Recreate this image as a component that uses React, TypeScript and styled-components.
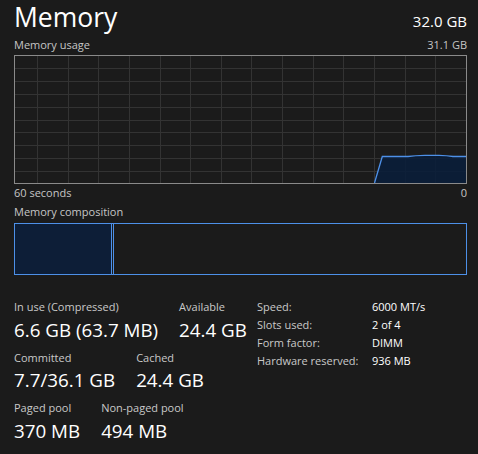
import React from "react";
import styled, { createGlobalStyle } from "styled-components";

const Global = createGlobalStyle`
  html, body { margin: 0; padding: 0; background: #1b1b1b; }
  body { font-family: "Open Sans", "Noto Sans", sans-serif; -webkit-font-smoothing: antialiased; }
`;

const Page = styled.div`
  width: 478px;
  height: 454px;
  box-sizing: border-box;
  padding: 0 11px 0 14px;
  background: #1b1b1b;
  overflow: hidden;
`;

const Header = styled.div`
  display: flex;
  justify-content: space-between;
  align-items: baseline;
  height: 34px;
  line-height: 34px;
  color: #ffffff;
`;

const Title = styled.div`
  font-size: 26.5px;
`;

const Total = styled.div`
  font-size: 15px;
`;

const SmallRow = styled.div<{ $mt: number; $lh: number }>`
  display: flex;
  justify-content: space-between;
  margin-top: ${(p) => p.$mt}px;
  line-height: ${(p) => p.$lh}px;
  font-size: 11px;
  color: #c6c6c6;
`;

const ChartFrame = styled.div`
  margin-top: 2px;
  border: 1px solid #8a8a8a;
  height: 127px;
  position: relative;
  svg { display: block; }
`;

const CompBar = styled.div`
  margin-top: 3px;
  height: 50px;
  border: 1px solid #4d90e8;
  display: flex;
`;

const Segment = styled.div<{ $w: number; $fill?: boolean }>`
  width: ${(p) => p.$w}px;
  flex: none;
  background: ${(p) => (p.$fill ? "#0d1e37" : "transparent")};
  border-right: 1px solid #4d90e8;
`;

const Stats = styled.div`
  margin-top: 23px;
  display: grid;
  grid-template-columns: 243px 1fr;
  align-items: start;
`;

const LeftCol = styled.div`
  padding-top: 1px;
`;

const StatRow = styled.div`
  display: flex;
  gap: 21px;
  margin-bottom: 8px;
`;

const Stat = styled.div`
  display: flex;
  flex-direction: column;
`;

const StatLabel = styled.div`
  font-size: 11px;
  line-height: 16px;
  color: #c9c9c9;
  white-space: nowrap;
`;

const StatValue = styled.div`
  font-size: 18.8px;
  line-height: 24px;
  margin-top: 2.5px;
  color: #ffffff;
  white-space: nowrap;
`;

const Table = styled.div`
  display: grid;
  grid-template-columns: 115px auto;
  align-content: start;
  font-size: 11px;
  line-height: 18px;
`;

const TKey = styled.div`
  color: #c9c9c9;
  white-space: nowrap;
`;

const TVal = styled.div`
  color: #ffffff;
  white-space: nowrap;
`;

const vLines = [22, 53, 83, 114, 145, 175, 206, 236, 267, 298, 328, 359, 390, 420];
const hLines = [12, 25, 38, 51, 64, 76, 89, 102, 115];

const linePath =
  "M359.5 127 L367.3 100.5 L393 100.5 Q400 99.6 410 99.4 L424 99.4 Q432 99.6 438 100.5 L451 100.5";

function UsageChart() {
  return (
    <svg width="451" height="127" viewBox="0 0 451 127">
      {vLines.map((x) => (
        <rect key={"v" + x} x={x} y={0} width={1} height={127} fill="#333333" shapeRendering="crispEdges" />
      ))}
      {hLines.map((y) => (
        <rect key={"h" + y} x={0} y={y} width={451} height={1} fill="#333333" shapeRendering="crispEdges" />
      ))}
      <path d={linePath + " L451 127 Z"} fill="rgba(10,30,58,0.9)" />
      <path d={linePath} fill="none" stroke="#4d90e8" strokeWidth={1.3} />
    </svg>
  );
}

const stats = [
  [
    { label: "In use (Compressed)", value: "6.6 GB (63.7 MB)" },
    { label: "Available", value: "24.4 GB" },
  ],
  [
    { label: "Committed", value: "7.7/36.1 GB" },
    { label: "Cached", value: "24.4 GB" },
  ],
  [
    { label: "Paged pool", value: "370 MB" },
    { label: "Non-paged pool", value: "494 MB" },
  ],
];

const details = [
  ["Speed:", "6000 MT/s"],
  ["Slots used:", "2 of 4"],
  ["Form factor:", "DIMM"],
  ["Hardware reserved:", "936 MB"],
];

export default function App() {
  return (
    <Page>
      <Global />
      <Header>
        <Title>Memory</Title>
        <Total>32.0 GB</Total>
      </Header>
      <SmallRow $mt={3} $lh={16}>
        <span>Memory usage</span>
        <span>31.1 GB</span>
      </SmallRow>
      <ChartFrame>
        <UsageChart />
      </ChartFrame>
      <SmallRow $mt={0} $lh={17}>
        <span>60 seconds</span>
        <span>0</span>
      </SmallRow>
      <SmallRow $mt={3} $lh={16}>
        <span>Memory composition</span>
      </SmallRow>
      <CompBar>
        <Segment $w={96} $fill />
        <Segment $w={1} />
      </CompBar>
      <Stats>
        <LeftCol>
          {stats.map((row, i) => (
            <StatRow key={i}>
              {row.map((s) => (
                <Stat key={s.label}>
                  <StatLabel>{s.label}</StatLabel>
                  <StatValue>{s.value}</StatValue>
                </Stat>
              ))}
            </StatRow>
          ))}
        </LeftCol>
        <Table>
          {details.map(([k, v]) => (
            <React.Fragment key={k}>
              <TKey>{k}</TKey>
              <TVal>{v}</TVal>
            </React.Fragment>
          ))}
        </Table>
      </Stats>
    </Page>
  );
}
